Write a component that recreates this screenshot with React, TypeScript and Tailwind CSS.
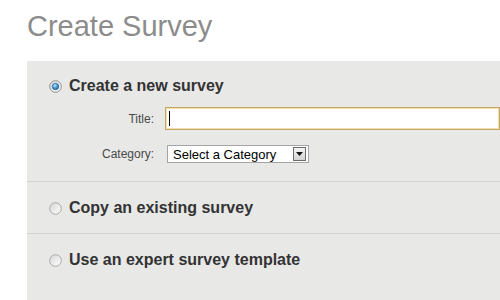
import React from 'react';

const font = { fontFamily: '"Liberation Sans", Arial, sans-serif' };

const Radio: React.FC<{ checked?: boolean }> = ({ checked }) => (
  <svg width="13" height="13" viewBox="0 0 13 13" className="shrink-0">
    <defs>
      <linearGradient id={checked ? 'rfOn' : 'rfOff'} x1="0" y1="0" x2="1" y2="1">
        <stop offset="0" stopColor="#d6d6d6" />
        <stop offset="1" stopColor="#ffffff" />
      </linearGradient>
      <radialGradient id="dot" cx="0.4" cy="0.35" r="0.7">
        <stop offset="0" stopColor="#bfe3fb" />
        <stop offset="0.5" stopColor="#4a9ad6" />
        <stop offset="1" stopColor="#1d5e96" />
      </radialGradient>
    </defs>
    <circle cx="6.5" cy="6.5" r="5.8" fill={`url(#${checked ? 'rfOn' : 'rfOff'})`} stroke={checked ? '#8e8f8f' : '#a9a9a9'} strokeWidth="1" />
    {checked && <circle cx="6.5" cy="6.5" r="3.3" fill="url(#dot)" stroke="#2a6496" strokeWidth="0.6" />}
  </svg>
);

const OptionRow: React.FC<{ label: string; checked?: boolean }> = ({ label, checked }) => (
  <div className="flex items-center h-[20px] gap-[7px]">
    <Radio checked={checked} />
    <span className="text-[16px] font-bold text-[#333333] leading-none">{label}</span>
  </div>
);

export default function App() {
  return (
    <div className="w-[500px] h-[300px] overflow-hidden bg-white flex flex-col" style={font}>
      <div className="h-[61px] pt-[12px] pl-[27px] shrink-0">
        <h1 className="text-[29px] leading-[29px] text-[#8c8c8c]">Create Survey</h1>
      </div>

      <div className="ml-[27px] flex-1 bg-[#e8e8e7] flex flex-col">
        {/* new survey */}
        <div className="pt-[15px] pl-[22px] pb-[18px] border-b border-[#d2d2d2]">
          <OptionRow label="Create a new survey" checked />
          <div className="grid grid-cols-[105px_1fr] gap-x-[11px] items-center -ml-[22px] pl-[22px] mt-[11px]">
            <span className="text-[12px] text-[#4a4a4a] text-right">Title:</span>
            <div className="w-[335px] h-[23px] bg-white border border-[#c6a567] shadow-[inset_0_0_0_1px_#f2e0ae] flex items-center pl-[3px]">
              <span className="w-px h-[15px] bg-black" />
            </div>
            <span className="text-[12px] text-[#4a4a4a] text-right mt-[15px]">Category:</span>
            <div className="mt-[15px] ml-[2px] w-[142px] h-[18px] bg-white border border-[#a5a5a5] flex items-center justify-between pl-[5px] pr-[2px]">
              <span className="text-[13px] text-black leading-none">Select a Category</span>
              <span className="w-[13px] h-[14px] border border-[#6d6d6d] bg-gradient-to-b from-[#f4f4f4] to-[#d2d2d2] flex items-center justify-center">
                <svg width="7" height="4" viewBox="0 0 7 4">
                  <path d="M0 0h7L3.5 4z" fill="#111" />
                </svg>
              </span>
            </div>
          </div>
        </div>

        {/* copy */}
        <div className="pt-[16px] pb-[15px] pl-[22px] border-b border-[#d2d2d2]">
          <OptionRow label="Copy an existing survey" />
        </div>

        {/* template */}
        <div className="pt-[16px] pl-[22px] flex-1">
          <OptionRow label="Use an expert survey template" />
        </div>
      </div>
    </div>
  );
}
